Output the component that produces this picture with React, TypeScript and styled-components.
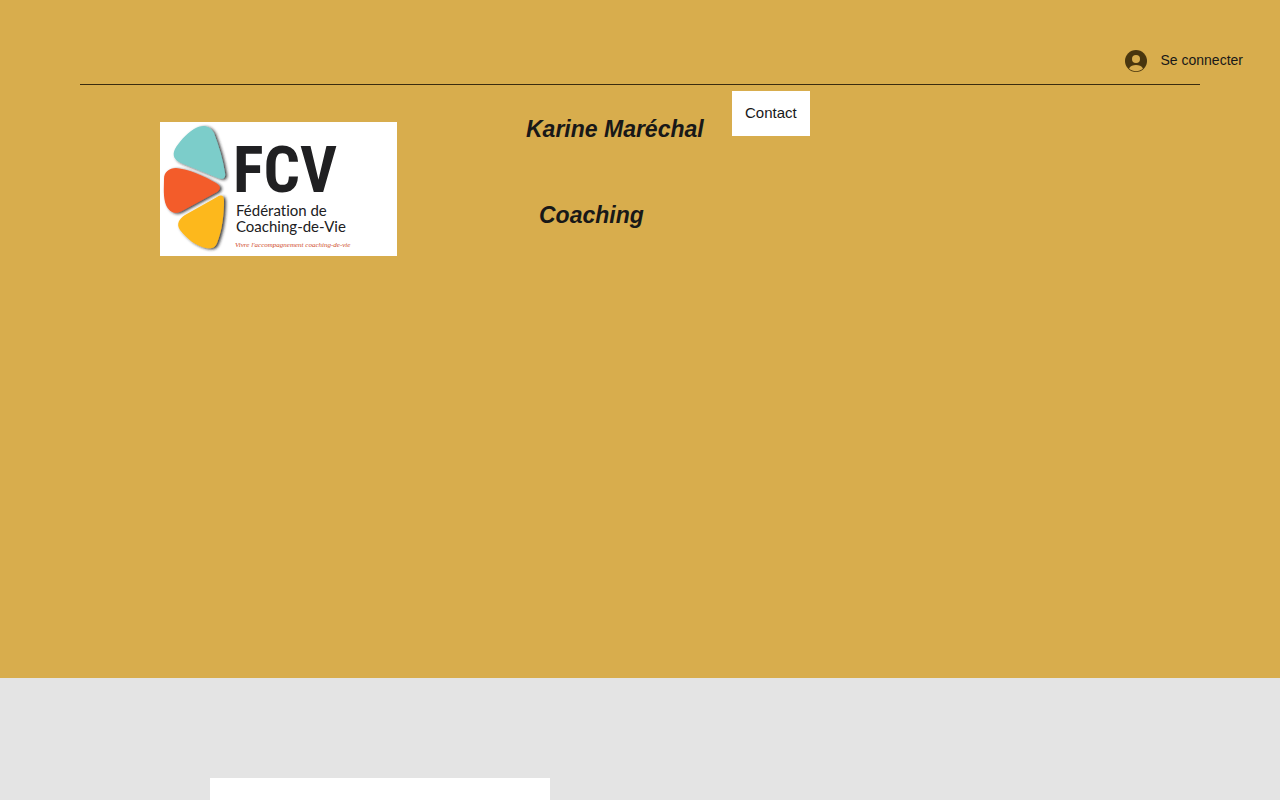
import styled, { createGlobalStyle } from "styled-components";

const GlobalStyle = createGlobalStyle`
  *, *::before, *::after { box-sizing: border-box; }
  body {
    margin: 0;
    font-family: "Liberation Sans", Arial, sans-serif;
    color: #181818;
    background: #e4e4e4;
  }
`;

const Page = styled.div`
  display: flex;
  flex-direction: column;
  min-height: 100vh;
`;

const Hero = styled.header`
  min-height: 678px;
  background: #d8ad4d;
`;

const AccountBar = styled.div`
  display: flex;
  justify-content: flex-end;
  align-items: center;
  height: 84px;
  padding: 38px 37px 0 0;
`;

const LoginButton = styled.button`
  display: flex;
  align-items: flex-start;
  gap: 14px;
  padding: 0;
  border: 0;
  background: none;
  color: inherit;
  font: 14px/20px "Liberation Sans", Arial, sans-serif;
  cursor: pointer;
`;

const LoginIcon = styled.svg`
  display: block;
  width: 22px;
  height: 22px;
`;

const Divider = styled.hr`
  height: 1px;
  margin: 0 80px;
  border: 0;
  background: #3b2c10;
`;

const Banner = styled.div`
  display: grid;
  grid-template-columns: 366px 206px auto;
  justify-content: start;
  align-items: start;
  max-width: 960px;
  margin: 0 auto;
  padding-top: 6px;
`;

const LogoLink = styled.a`
  display: block;
  width: 237px;
  margin-top: 31px;
  background: #fff;
`;

const Logo = styled.svg`
  display: block;
  width: 100%;
  height: 134px;
`;

const Initials = styled.text`
  fill: #202022;
  font: 700 64px "Roboto Condensed", "Liberation Sans Narrow", sans-serif;
`;

const LogoName = styled.text`
  fill: #202022;
  font: 400 15px Lato, sans-serif;
  font-variant-ligatures: none;
`;

const Tagline = styled.text`
  fill: #cf4c2c;
  font: italic 400 7px "Liberation Serif", serif;
`;

const Titles = styled.div`
  display: flex;
  flex-direction: column;
  gap: 60px;
  padding-top: 25px;
`;

const Title = styled.h1`
  margin: 0;
  font-size: 23px;
  line-height: 26px;
  font-weight: 700;
  font-style: italic;
  white-space: nowrap;
`;

const Subtitle = styled(Title).attrs({ as: "p" })`
  padding-left: 13px;
`;

const NavLink = styled.a`
  display: block;
  height: 45px;
  padding: 0 13px;
  background: #fff;
  color: inherit;
  font-size: 15px;
  line-height: 44px;
  text-decoration: none;
`;

const Content = styled.main`
  display: flex;
  flex: 1;
  width: 100%;
  max-width: 860px;
  margin: 0 auto;
  padding-top: 100px;
`;

const Card = styled.section`
  width: 340px;
  background: #fff;
`;

function FederationLogo() {
  return (
    <Logo viewBox="0 0 237 134" role="img" aria-label="FCV Fédération de Coaching-de-Vie">
      <defs>
        <filter id="petalShadow" x="-20%" y="-20%" width="150%" height="150%">
          <feDropShadow dx="2" dy="1" stdDeviation="1.8" floodColor="#222" floodOpacity="0.85" />
        </filter>
      </defs>
      <g filter="url(#petalShadow)">
        <path
          d="M34 7C42 2 50 3 54 11C59 24 63 38 65 51C66 56 63 58 58 56L21 41C14 38 12 33 15 27C19 20 26 12 34 7Z"
          fill="#7ccdca"
        />
        <path
          d="M4 57C4 50 9 46 16 46C28 47 44 54 56 61C61 64 61 67 57 70L22 89C15 93 9 90 6 83C3 75 4 66 4 57Z"
          fill="#f35b2c"
        />
        <path
          d="M57 75C62 72 64 74 64 79C64 93 62 109 57 121C55 126 51 127 46 126C36 124 27 117 20 108C16 102 19 97 25 93Z"
          fill="#fdb81e"
        />
      </g>
      <Initials x="73" y="70">FCV</Initials>
      <LogoName x="76" y="94">Fédération de</LogoName>
      <LogoName x="76" y="110">Coaching-de-Vie</LogoName>
      <Tagline x="75" y="125">Vivre l'accompagnement coaching-de-vie</Tagline>
    </Logo>
  );
}

export default function App() {
  return (
    <>
      <GlobalStyle />
      <Page>
        <Hero>
          <AccountBar>
            <LoginButton type="button">
              <LoginIcon viewBox="0 0 22 22" aria-hidden="true">
                <circle cx="11" cy="11" r="11" fill="#49360f" />
                <circle cx="11" cy="9" r="4" fill="#d8ad4d" />
                <path d="M4 18.5C5.5 15.8 8 15 11 15C14 15 16.5 15.8 18 18.5C14 22 8 22 4 18.5Z" fill="#d8ad4d" />
              </LoginIcon>
              Se connecter
            </LoginButton>
          </AccountBar>
          <Divider />
          <Banner>
            <LogoLink href="#accueil">
              <FederationLogo />
            </LogoLink>
            <Titles>
              <Title>Karine Maréchal</Title>
              <Subtitle>Coaching</Subtitle>
            </Titles>
            <nav>
              <NavLink href="#contact">Contact</NavLink>
            </nav>
          </Banner>
        </Hero>
        <Content>
          <Card />
        </Content>
      </Page>
    </>
  );
}
